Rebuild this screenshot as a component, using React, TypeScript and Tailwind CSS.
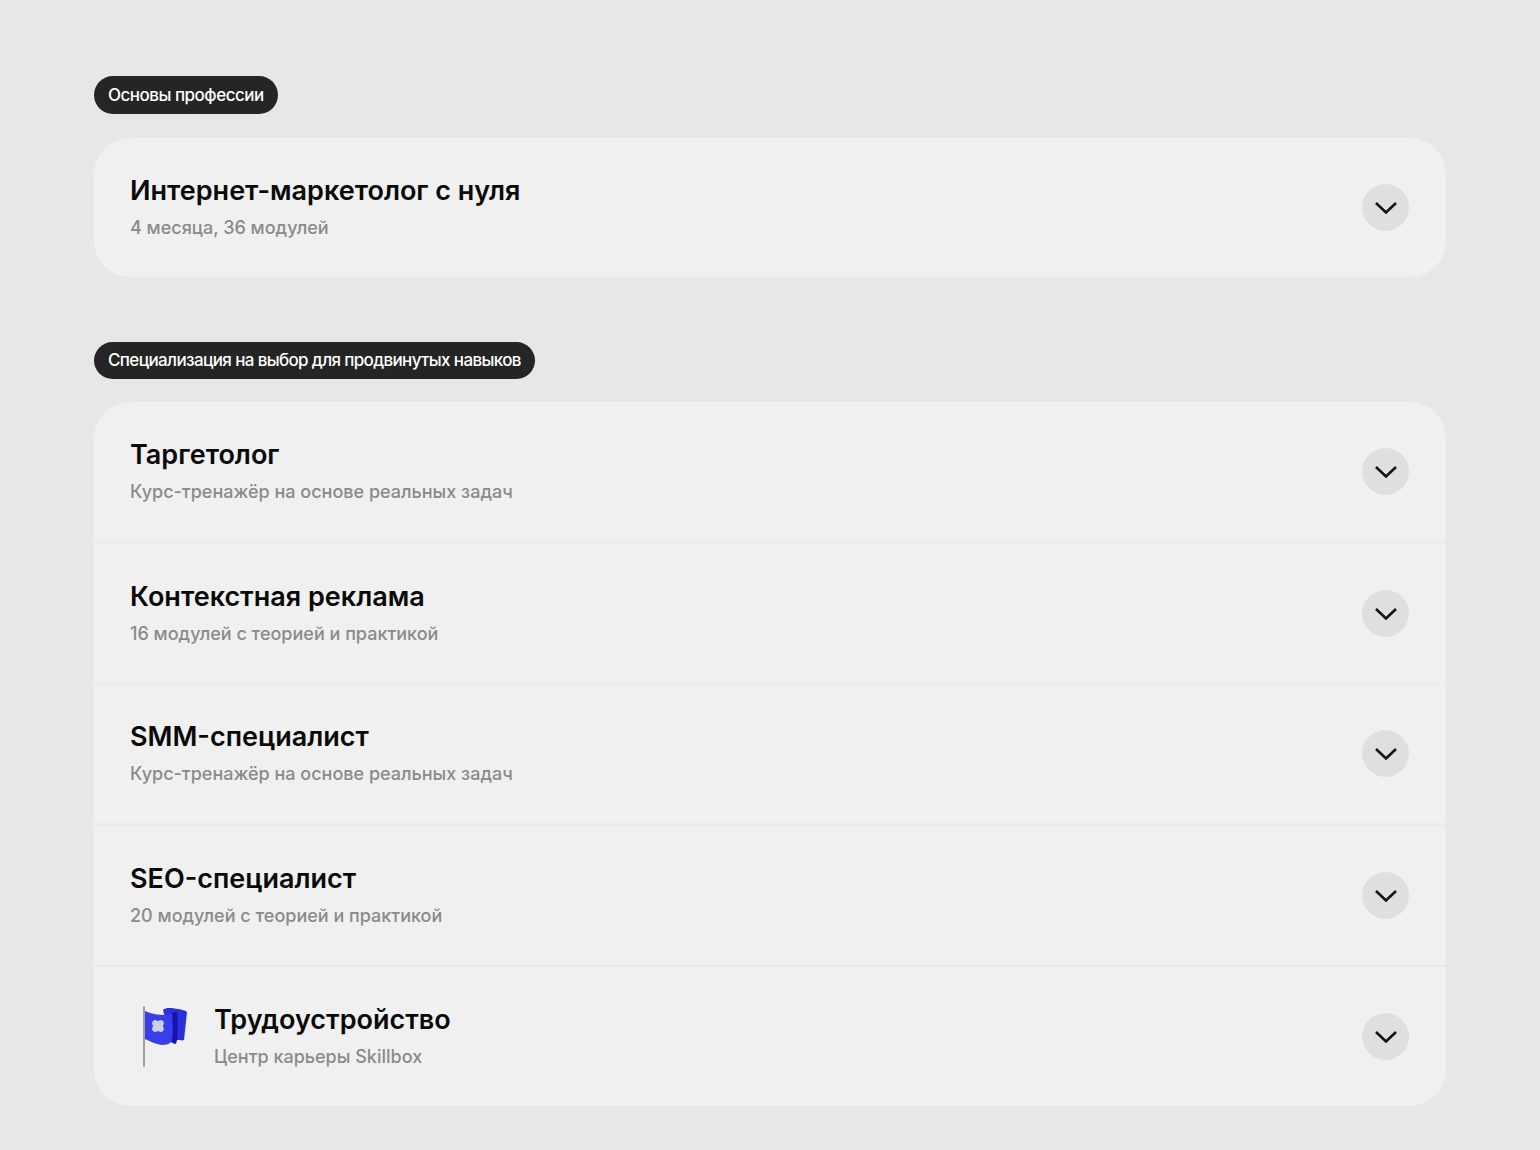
const F = "font-['Inter','Liberation_Sans',sans-serif]";

function Flag() {
  return (
    <svg width="46" height="62" viewBox="0 0 46 62" className="ml-3 shrink-0">
      <rect x="1" y="0" width="2" height="61" rx="1" fill="#a0a0a0" />
      <path d="M21 4 C24 1 30 2 36 3 C40 4 43 4 45 6 L42 34 C40 35 38 34 35 34 L34 38 L30 36 L25 20 Z" fill="#2c30dc" />
      <path d="M29 7 C31 6 33 6 35 6 C36 15 36 25 35 34 L33 38 L29 36 Z" fill="#1713ae" />
      <path d="M3 5 C10 8 17 9 23 9 C26 9 28 8 30 7 C31 17 31 26 30 35 C28 38 24 39 20 39 C13 38 8 35 3 33 Z" fill="#3a3ee8" />
      <path d="M11 15 C13 13 15 15 16 15 C17 15 19 13 21 15 C23 17 21 19 21 20 C21 21 23 23 21 25 C19 27 17 25 16 25 C15 25 13 27 11 25 C9 23 11 21 11 20 C11 19 9 17 11 15 Z" fill="#c9d0e6" />
    </svg>
  );
}

function Chevron() {
  return (
    <div className="flex h-[47px] w-[47px] shrink-0 items-center justify-center rounded-full bg-[#dfdfdf]">
      <svg width="24" height="24" viewBox="0 0 24 24" fill="none">
        <path d="M2 7 L12 16.5 L22 7" stroke="#111111" strokeWidth="2.6" />
      </svg>
    </div>
  );
}

function Pill({ children, className }: { children: string; className: string }) {
  return (
    <div className={`inline-flex items-center rounded-full bg-[#252525] px-3.5 text-[17px] font-medium text-white ${className}`}>
      {children}
    </div>
  );
}

function Row({ title, sub, flag }: { title: string; sub: string; flag?: boolean }) {
  return (
    <div className="flex h-[139px] items-center justify-between pl-9 pr-[37px]">
      <div className="flex items-center gap-[26px]">
        {flag && <Flag />}
        <div className="flex flex-col pb-[3px]">
          <div className="text-[27px] leading-[36px] font-semibold text-[#0a0a0a]">{title}</div>
          <div className="mt-[7px] text-[18px] leading-[24px] font-medium text-[#8a8a8a]">{sub}</div>
        </div>
      </div>
      <Chevron />
    </div>
  );
}

export default function App() {
  return (
    <div className={`${F} min-h-[1150px] bg-[#e7e7e7] px-[94px] pt-[76px]`}>
      <Pill className="h-[38px] pt-[2px] tracking-[-0.5px]">Основы профессии</Pill>
      <div className="mt-[24px] overflow-hidden rounded-[36px] bg-[#f0f0f0]">
        <Row title="Интернет-маркетолог с нуля" sub="4 месяца, 36 модулей" />
      </div>
      <div className="mt-[65px]">
        <Pill className="h-[37px] tracking-[-0.64px]">Специализация на выбор для продвинутых навыков</Pill>
      </div>
      <div className="mt-[23px] overflow-hidden rounded-[36px] bg-[#f0f0f0]">
        <Row title="Таргетолог" sub="Курс-тренажёр на основе реальных задач" />
        <div className="h-[3px] bg-[#ebebeb]" />
        <Row title="Контекстная реклама" sub="16 модулей с теорией и практикой" />
        <div className="h-px bg-[#e8e8e8]" />
        <Row title="SMM-специалист" sub="Курс-тренажёр на основе реальных задач" />
        <div className="h-[3px] bg-[#ebebeb]" />
        <Row title="SEO-специалист" sub="20 модулей с теорией и практикой" />
        <div className="h-[2px] bg-[#e9e9e9]" />
        <Row title="Трудоустройство" sub="Центр карьеры Skillbox" flag />
      </div>
    </div>
  );
}
